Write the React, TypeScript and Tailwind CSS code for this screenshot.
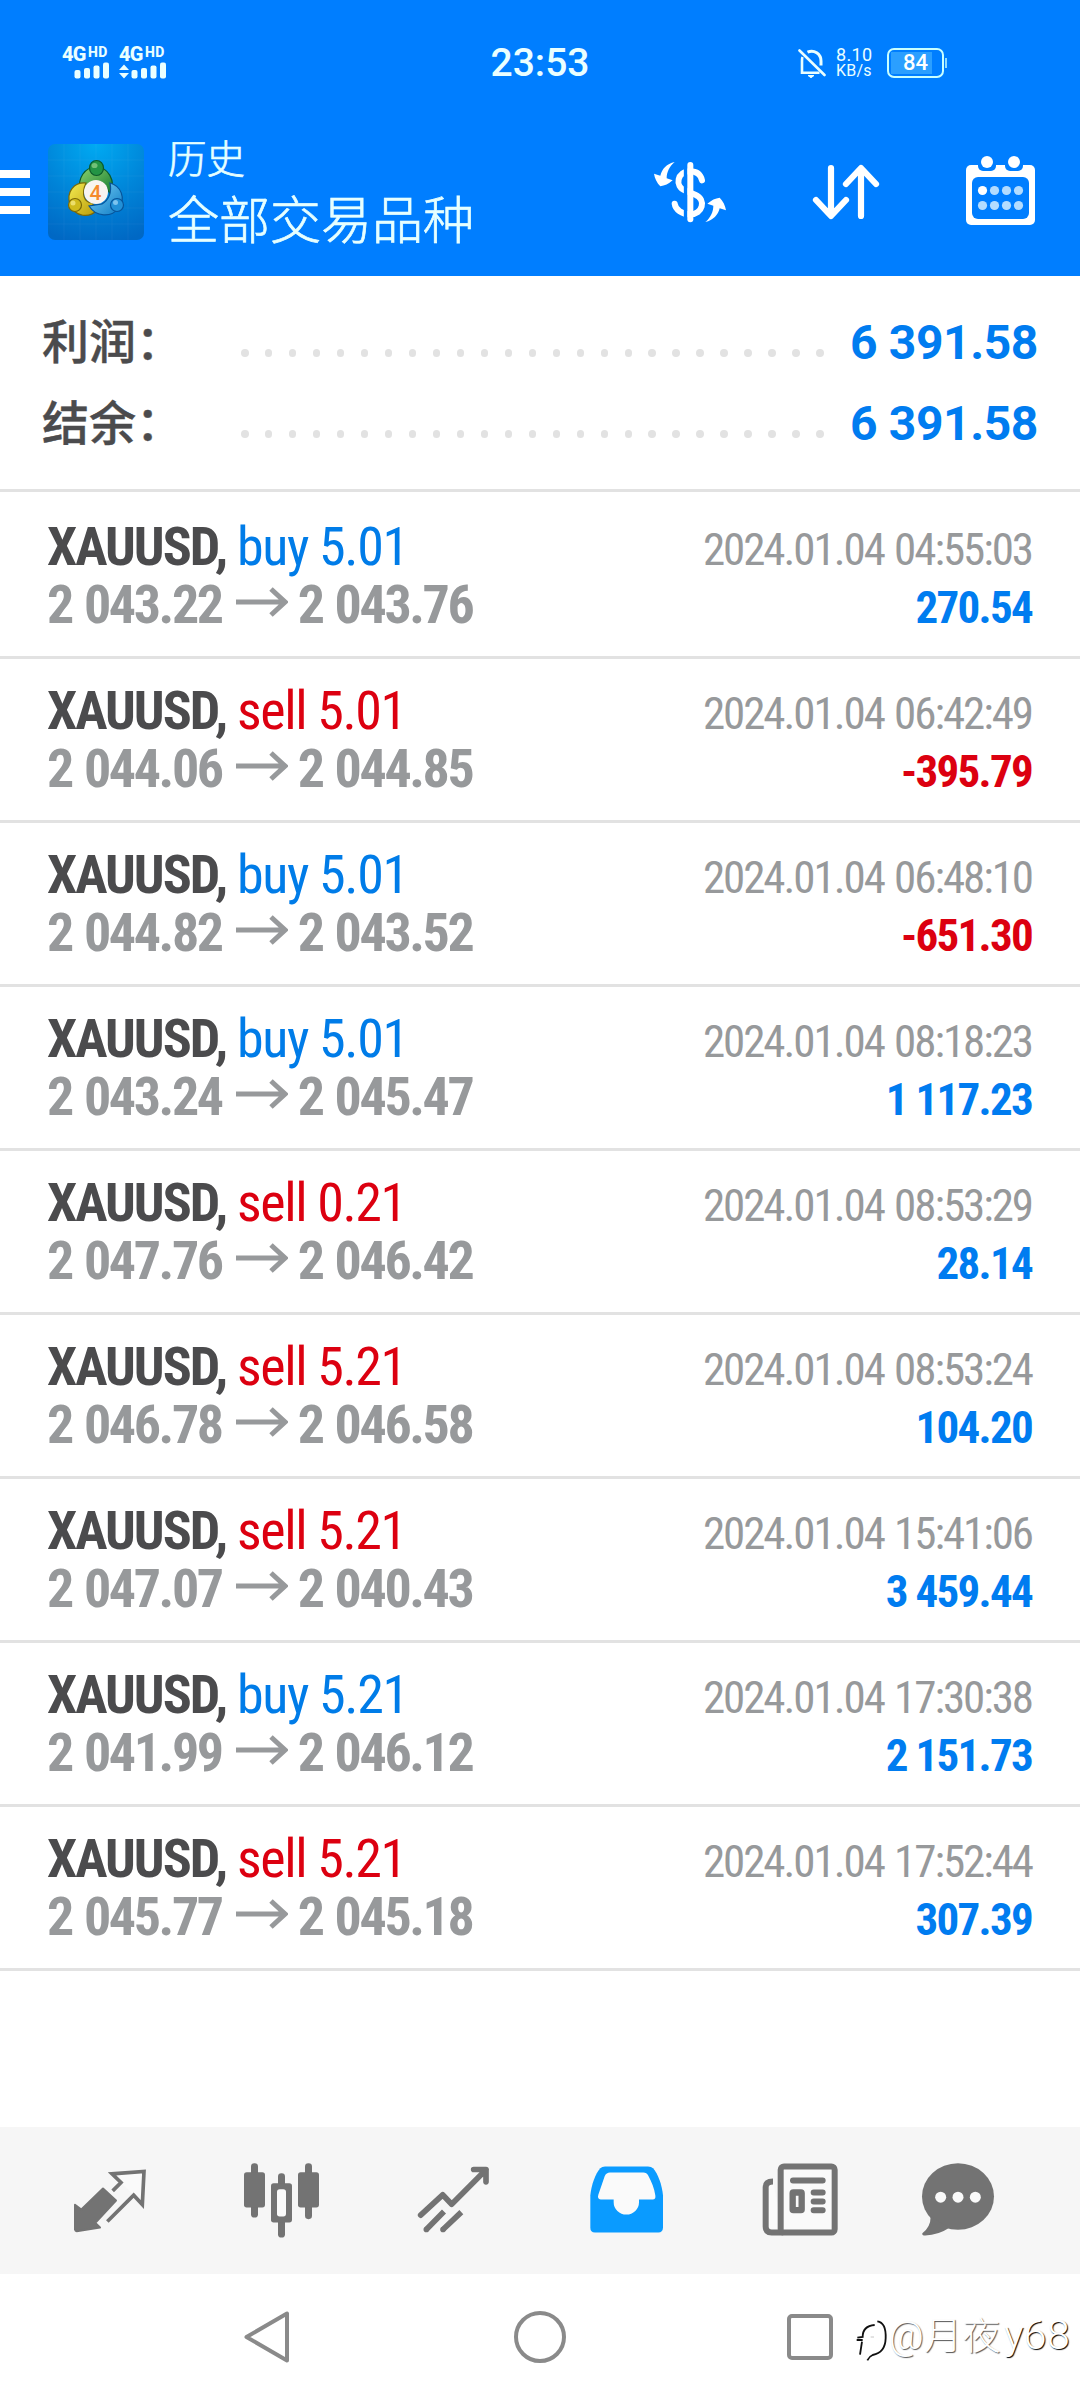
type Deal = {
    side: "buy" | "sell";
    volume: string;
    open: string;
    close: string;
    time: string;
    profit: string;
};

const deals: Deal[] = [
    {side: "buy", volume: "5.01", open: "2 043.22", close: "2 043.76", time: "2024.01.04 04:55:03", profit: "270.54"},
    {side: "sell", volume: "5.01", open: "2 044.06", close: "2 044.85", time: "2024.01.04 06:42:49", profit: "-395.79"},
    {side: "buy", volume: "5.01", open: "2 044.82", close: "2 043.52", time: "2024.01.04 06:48:10", profit: "-651.30"},
    {side: "buy", volume: "5.01", open: "2 043.24", close: "2 045.47", time: "2024.01.04 08:18:23", profit: "1 117.23"},
    {side: "sell", volume: "0.21", open: "2 047.76", close: "2 046.42", time: "2024.01.04 08:53:29", profit: "28.14"},
    {side: "sell", volume: "5.21", open: "2 046.78", close: "2 046.58", time: "2024.01.04 08:53:24", profit: "104.20"},
    {side: "sell", volume: "5.21", open: "2 047.07", close: "2 040.43", time: "2024.01.04 15:41:06", profit: "3 459.44"},
    {side: "buy", volume: "5.21", open: "2 041.99", close: "2 046.12", time: "2024.01.04 17:30:38", profit: "2 151.73"},
    {side: "sell", volume: "5.21", open: "2 045.77", close: "2 045.18", time: "2024.01.04 17:52:44", profit: "307.39"},
];

function Signal({data}: { data?: boolean }) {
    return (
        <div className="flex flex-col w-[47px] h-[32px]">
            <div className="flex items-start h-[15px] font-extrabold">
                <span className="text-[20px] leading-[15px] w-[26px] tracking-[-0.8px]">4G</span>
                <span className="text-[14px] leading-[10px] tracking-[0.3px]">HD</span>
            </div>
            <svg className="w-[47px] h-[17px]" viewBox="0 0 47 17" fill="currentColor">
                {data && <path d="M5 2.5l5 5.5H0zM5 16.5l5-5.5H0z"/>}
                <rect x="12.5" y="8" width="6" height="8.5" rx="2"/>
                <rect x="22" y="6" width="6" height="10.5" rx="2"/>
                <rect x="31.5" y="3.5" width="6" height="13" rx="2"/>
                <rect x="41" y="0.5" width="6" height="16" rx="2"/>
            </svg>
        </div>
    );
}

function StatusBar() {
    return (
        <div className="grid grid-cols-3 items-center h-[124px] pl-[62px] pr-[133px] pt-px text-[#eaffff]">
            <div className="flex gap-[10px]">
                <Signal/>
                <Signal data/>
            </div>
            <div className="text-[39px] leading-[40px] font-medium text-center pl-[71px]">23:53</div>
            <div className="flex items-center justify-end">
                <svg className="w-[28px] h-[30px]" viewBox="0 0 28 30" fill="none" stroke="currentColor" strokeWidth="2.6">
                    <path d="M1.5 2.5L26.500 27" strokeLinecap="round"/>
                    <path d="M4.500 9C4 10 4 11 4 13V24.800H21.500"/>
                    <path d="M9.500 4.200C16 1 23 6 23 13V17.500" strokeWidth="3"/>
                    <path d="M10 27.500h6l-3 2.200z" fill="currentColor" strokeWidth="1"/>
                </svg>
                <div className="ml-[10px] w-[37px]">
                    <div className="text-[18px] leading-[17px] tracking-[0.3px]">8.10</div>
                    <div className="text-[16px] leading-[16px] tracking-[0.2px]">KB/s</div>
                </div>
                <div className="ml-[14px] w-[57px] h-[30px] border-2 border-[#c8ffff] rounded-[7px] p-[2px]">
                    <div className="w-[41px] h-full bg-[#2b9fff] flex justify-end items-center">
                        <span className="text-[22px] leading-[22px] font-medium text-white pr-[4px]">84</span>
                    </div>
                </div>
                <div className="w-[2px] h-[10px] bg-[#8fdcff] ml-px"/>
            </div>
        </div>
    );
}

function AppLogo() {
    return (
        <svg className="w-[96px] h-[96px] ml-[18px]" viewBox="0 0 96 96">
            <defs>
                <radialGradient id="tile" cx="50%" cy="0%" r="105%">
                    <stop offset="0" stopColor="#00aaf2"/>
                    <stop offset="0.55" stopColor="#0084d8"/>
                    <stop offset="1" stopColor="#0068c4"/>
                </radialGradient>
                <linearGradient id="green" x1="0" y1="0" x2="1" y2="1">
                    <stop offset="0" stopColor="#8fd36e"/>
                    <stop offset="1" stopColor="#0f7a30"/>
                </linearGradient>
                <linearGradient id="yellow" x1="0" y1="0" x2="1" y2="1">
                    <stop offset="0" stopColor="#f4ec52"/>
                    <stop offset="1" stopColor="#b99a08"/>
                </linearGradient>
                <linearGradient id="sky" x1="0" y1="0" x2="1" y2="1">
                    <stop offset="0" stopColor="#7fd4f8"/>
                    <stop offset="1" stopColor="#0a79c4"/>
                </linearGradient>
            </defs>
            <rect width="96" height="96" rx="7" fill="url(#tile)"/>
            <g stroke="#ffffff" strokeOpacity="0.04">
                <path d="M16 0V96M32 0V96M48 0V96M64 0V96M80 0V96M0 16H96M0 32H96M0 48H96M0 64H96M0 80H96"/>
            </g>
            <g strokeWidth="1.200">
                <path d="M32 48C29 34 37 23 48 23C60 23 68 36 63 51L56 40C50 34 40 38 37 47Z" fill="url(#green)" stroke="#0b5a2a"/>
                <path d="M38 39C26 38 18 48 22 60C27 74 42 74 49 66L44 59C36 58 33 50 38 39Z" fill="url(#yellow)" stroke="#7a6808"/>
                <path d="M62 39C73 42 78 54 71 64C63 74 48 73 41 62L54 60C61 56 64 48 62 39Z" fill="url(#sky)" stroke="#07549a"/>
                <ellipse cx="48.5" cy="24" rx="7" ry="7.500" fill="#239445" stroke="#0b5a2a"/>
                <circle cx="27" cy="61" r="6.500" fill="#d0bb1c" stroke="#7a6808"/>
                <circle cx="69" cy="61" r="6.500" fill="#2290d6" stroke="#07549a"/>
            </g>
            <ellipse cx="46.500" cy="21.500" rx="3" ry="2.600" fill="#a5dd9a" opacity="0.6"/>
            <circle cx="25" cy="59" r="2.500" fill="#fff7a0" opacity="0.6"/>
            <circle cx="67.500" cy="58.500" r="2.500" fill="#b9e6ff" opacity="0.6"/>
            <circle cx="48" cy="48" r="12" fill="#f8f4f0"/>
            <text x="47.500" y="55.500" textAnchor="middle" fontFamily="Roboto" fontSize="21" fill="#f58a2c" fontWeight="500">4</text>
        </svg>
    );
}

function Toolbar() {
    return (
        <div className="flex items-center h-[136px] pr-[38px]">
            <div className="flex flex-col gap-[10px]">
                <div className="w-[30px] h-[8px] bg-white"/>
                <div className="w-[30px] h-[8px] bg-white"/>
                <div className="w-[30px] h-[8px] bg-white"/>
            </div>
            <AppLogo/>
            <div className="ml-[24px] mb-[2px] font-['Noto_Sans_CJK_SC',sans-serif] font-light text-[#e6ffff] [-webkit-text-stroke:0.7px_#e6ffff]">
                <div className="text-[38.500px] leading-[52px]">历史</div>
                <div className="text-[51px] leading-[70px]">全部交易品种</div>
            </div>
            {/* currency exchange */}
            <svg className="w-[84px] h-[84px] ml-auto" viewBox="24 15 252 252" fill="none">
                <path d="M186 106C182 88 168 79 150 79C112 79 102 124 136 137L166 149C200 164 188 208 150 208C126 208 106 194 104 176"
                      stroke="#fff" strokeWidth="18" strokeLinecap="round"/>
                <path d="M137 55V230" stroke="#007eff" strokeWidth="11"/>
                <path d="M151 60V223" stroke="#fff" strokeWidth="18" strokeLinecap="round"/>
                <path d="M104 51C80 56 66 72 61 92L42 86C44 100 51 114 61 124Q80 122 98 106L80 100C80 82 88 64 104 51Z" fill="#fff"/>
                <path d="M104 51C80 56 66 72 61 92L42 86C44 100 51 114 61 124Q80 122 98 106L80 100C80 82 88 64 104 51Z" fill="#fff"
                      transform="rotate(180 150 141)"/>
            </svg>
            {/* sort */}
            <svg className="w-[84px] h-[84px] ml-[72px]" viewBox="804 150 84 84" fill="none" stroke="#fff" strokeWidth="6.200"
                 strokeLinecap="round" strokeLinejoin="round">
                <path d="M831 168V215M816 200L831 216L846 200M861 216V169M846 184L861 168L876 184"/>
            </svg>
            {/* calendar */}
            <svg className="w-[84px] h-[84px] ml-[70px]" viewBox="958 150 84 84">
                <rect x="966" y="165" width="69" height="60" rx="5" fill="#fff"/>
                <rect x="978" y="158" width="18" height="13" rx="5" fill="#007eff"/>
                <rect x="1005" y="158" width="18" height="13" rx="5" fill="#007eff"/>
                <circle cx="987" cy="162" r="6" fill="#fff"/>
                <circle cx="1014" cy="162" r="6" fill="#fff"/>
                <rect x="972" y="177" width="57" height="42" rx="6" fill="#007eff"/>
                <circle cx="982.500" cy="190.500" r="4.600" fill="#fff"/>
                <g fill="#b3dcff">
                    <circle cx="994.500" cy="190.500" r="4.600"/>
                    <circle cx="1006.500" cy="190.500" r="4.600"/>
                    <circle cx="1018.500" cy="190.500" r="4.600"/>
                    <circle cx="982.500" cy="205.500" r="4.600"/>
                    <circle cx="994.500" cy="205.500" r="4.600"/>
                    <circle cx="1006.500" cy="205.500" r="4.600"/>
                    <circle cx="1018.500" cy="205.500" r="4.600"/>
                </g>
            </svg>
        </div>
    );
}

function SummaryRow({label, value}: { label: string; value: string }) {
    return (
        <div className="flex items-center h-[81px]">
            <div className="w-[199px] pb-[8px] text-[47px] leading-[60px] font-medium text-[#4b4b4d] [-webkit-text-stroke:0.4px_#4b4b4d] font-['Noto_Sans_CJK_SC',sans-serif]">{label}</div>
            <div className="flex justify-between w-[583px] mt-[21px]">
                {Array.from({length: 25}, (_, i) => (
                    <div key={i} className="size-[7.500px] rounded-full bg-[#e2e2e2]"/>
                ))}
            </div>
            <div className="ml-auto text-[48px] leading-[81px] font-bold tracking-[-0.4px] text-[#007cf0]">{value}</div>
        </div>
    );
}

function DealRow({deal}: { deal: Deal }) {
    return (
        <div className="h-[164px] pt-[23px] pl-[47px] pr-[48px] border-b-[3px] border-[#e2e2e2] [font-stretch:75%]">
            <div className="flex justify-between items-baseline h-[58px] leading-[58px]">
                <div className="text-[54px] whitespace-pre">
                    <span className="inline-block w-[190px] font-bold text-[#4b4b4d] tracking-[-2px]">XAUUSD,</span>
                    <span className={deal.side === "buy" ? "tracking-[-1.400px] text-[#007ce8]" : "tracking-[-1.400px] text-[#dc0010]"}>{deal.side} {deal.volume}</span>
                </div>
                <div className="text-[45px] tracking-[-2.050px] [word-spacing:2px] text-[#97999b]">{deal.time}</div>
            </div>
            <div className="flex justify-between items-baseline h-[58px] leading-[58px]">
                <div className="flex items-baseline text-[54px] font-bold tracking-[-2.400px] [word-spacing:2px] text-[#97999b]">
                    <span>{deal.open}</span>
                    <svg className="w-[52px] h-[38px] ml-[14px] mr-[10px]" viewBox="0 0 52 38" fill="none" stroke="currentColor" strokeWidth="5">
                        <path d="M0 17H49M35 4L49 17L35 30"/>
                    </svg>
                    <span>{deal.close}</span>
                </div>
                <div className={deal.profit.startsWith("-") ? "text-[45px] tracking-[-1.700px] font-bold text-[#dc0010]" : "text-[45px] tracking-[-1.700px] font-bold text-[#007cf0]"}>{deal.profit}</div>
            </div>
        </div>
    );
}

function BottomTabs() {
    return (
        <div className="flex items-center h-[147px] pl-[24px] bg-[#f6f6f6] text-[#737373]">
            {/* quotes */}
            <div className="w-[172px] flex justify-center">
                <svg className="size-[84px]" viewBox="204 145.5 252 252" fill="none">
                    <path d="M225 283L244 297L309 234L348 270L286 337L300 351L230 362Q226 362 225 357Z" fill="currentColor"
                          stroke="currentColor" strokeWidth="6" strokeLinejoin="round"/>
                    <path d="M362 216L336 190L432 183L427 282L401 254Z" fill="#fafafa"/>
                    <path d="M338 241L363 216L336 190L432 183L427 282L401 254L322 333" stroke="currentColor" strokeWidth="11"/>
                </svg>
            </div>
            {/* chart */}
            <div className="w-[172px] flex justify-center">
                <svg className="size-[84px]" viewBox="720 145.5 252 252" fill="currentColor">
                    <rect x="753" y="158" width="21" height="163" rx="10"/>
                    <rect x="732" y="185" width="63" height="106" rx="8"/>
                    <rect x="915" y="158" width="21" height="168" rx="10"/>
                    <rect x="894" y="185" width="63" height="106" rx="8"/>
                    <rect x="834" y="188" width="21" height="193" rx="10"/>
                    <rect x="813" y="218" width="63" height="118" rx="8"/>
                    <rect x="831" y="236" width="27" height="82" rx="8" fill="#fafafa"/>
                </svg>
            </div>
            {/* trade */}
            <div className="w-[172px] flex justify-center">
                <svg className="size-[84px]" viewBox="156 145.5 252 252" fill="none" stroke="currentColor" strokeWidth="17"
                     strokeLinecap="round" strokeLinejoin="round">
                    <path d="M182 314L248 253L275 281L378 178M341 177H378V214"/>
                    <path d="M199 357L252 303M249 357L304 305" strokeLinecap="butt"/>
                    <path d="M199 357h0.010M249 357h0.010"/>
                </svg>
            </div>
            {/* history */}
            <div className="w-[172px] flex justify-center">
                <svg className="size-[84px]" viewBox="672 145.5 252 252">
                    <path d="M691 255C694 222 706 190 721 173Q726 168 735 168H864Q874 168 879 173C894 190 906 222 909 255V352Q908 366 895 366H705Q691 366 691 352Z"
                          fill="#0a9bff"/>
                    <path d="M715 253L734 197Q739 186 750 186H850Q860 186 865 196C875 215 883 233 886 255Q888 267 878 267H837V275A38 37 0 0 1 761 275V267H722Q711 266 715 253Z"
                          fill="#fafafa"/>
                </svg>
            </div>
            {/* news */}
            <div className="w-[172px] flex justify-center">
                <svg className="size-[84px]" viewBox="108 145.5 252 252" fill="none" stroke="currentColor" strokeWidth="18">
                    <path d="M159 213Q137 213 137 230V348Q137 366 155 366H190" fill="#fafafa"/>
                    <rect x="182" y="168" width="162" height="198" rx="10" fill="#fafafa"/>
                    <path d="M219 210H308M281 246H308M281 273H308M281 299H308" strokeLinecap="round"/>
                    <rect x="218" y="246" width="27" height="53" rx="2" strokeWidth="19" strokeLinejoin="round"/>
                </svg>
            </div>
            {/* chat */}
            <div className="w-[148px] flex justify-center">
                <svg className="size-[84px]" viewBox="588 145.5 252 252" fill="currentColor">
                    <ellipse cx="714" cy="258" rx="108" ry="99.500"/>
                    <path d="M632 318Q632 350 607 368Q605 375 616 375Q655 374 688 352Z"/>
                    <g fill="#fafafa">
                        <circle cx="662" cy="260" r="16.500"/>
                        <circle cx="714" cy="260" r="16.500"/>
                        <circle cx="766" cy="260" r="16.500"/>
                    </g>
                </svg>
            </div>
        </div>
    );
}

function SystemNav() {
    return (
        <div className="flex items-center h-[126px] pl-[244px] text-[#8a8a8a]">
            <svg className="w-[45px] h-[52px]" viewBox="0 0 45 52" fill="none" stroke="currentColor" strokeWidth="4" strokeLinejoin="round">
                <path d="M43 2.500V49.500L2.500 26Z"/>
            </svg>
            <div className="size-[52px] ml-[225px] border-4 border-[#8a8a8a] rounded-full"/>
            <div className="size-[46px] ml-[221px] border-4 border-[#8a8a8a] rounded-[5px]"/>
            <svg className="w-[34px] h-[44px] mt-[8px] ml-[22px]" viewBox="45 60 102 132" fill="none" stroke="#111" strokeWidth="5.500">
                <path d="M60 167L66 128M50 123H68M52 116L68 114C68 92 78 80 104 78"/>
                <path d="M112 67C134 70 138 92 137 118C136 150 122 164 98 168Q88 172 82 184"/>
                <path d="M92 114H102" stroke="#aaa" strokeWidth="2"/>
            </svg>
            <div className="flex items-baseline mb-[4px] text-[38px] leading-[44px] font-light text-white whitespace-nowrap tracking-[0.4px] font-['Roboto','Noto_Sans_CJK_SC',sans-serif]">
                <span className="[text-shadow:1px_1px_1px_#555]">@月夜</span>
                <span className="ml-[3px] text-[41px] [text-shadow:1px_1px_1px_#000]">y68</span>
            </div>
        </div>
    );
}

export default function App() {
    return (
        <div className="flex flex-col w-[1080px] h-[2400px] bg-white overflow-hidden font-['Roboto','Noto_Sans_CJK_SC',sans-serif]">
            <div className="h-[276px] bg-[#007eff]">
                <StatusBar/>
                <Toolbar/>
            </div>
            <div className="h-[216px] pt-[26px] pl-[42px] pr-[42px] border-b-[3px] border-[#e2e2e2]">
                <SummaryRow label="利润：" value="6 391.58"/>
                <SummaryRow label="结余：" value="6 391.58"/>
            </div>
            <div className="grow pt-[3px]">
                {deals.map((deal) => (
                    <DealRow key={deal.time} deal={deal}/>
                ))}
            </div>
            <BottomTabs/>
            <SystemNav/>
        </div>
    );
}
